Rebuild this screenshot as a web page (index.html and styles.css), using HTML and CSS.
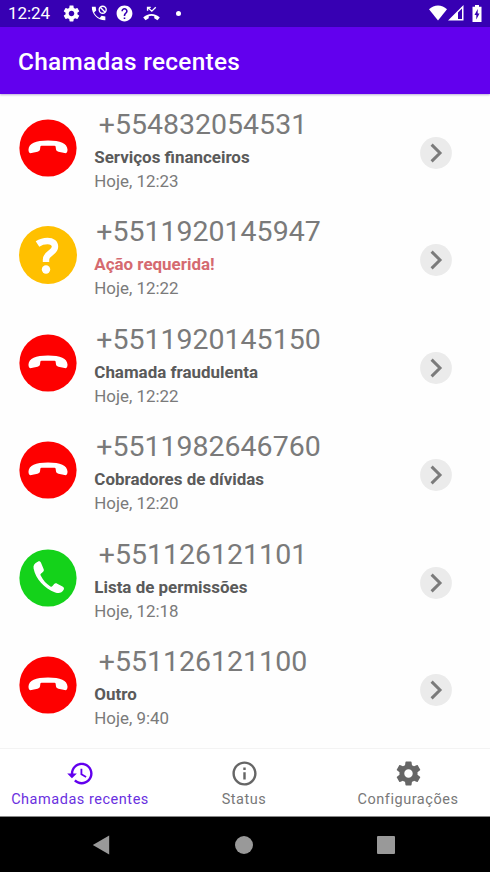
FILE: index.html
```html
<!DOCTYPE html>
<html lang="pt-BR">
<head>
<meta charset="utf-8">
<title>Chamadas recentes</title>
<link rel="stylesheet" href="styles.css">
</head>
<body>
<svg class="defs" aria-hidden="true">
  <symbol id="gear" viewBox="0 0 24 24"><path d="M19.43 12.98c.04-.32.07-.64.07-.98s-.03-.66-.07-.98l2.11-1.65c.19-.15.24-.42.12-.64l-2-3.46c-.12-.22-.39-.3-.61-.22l-2.49 1c-.52-.4-1.08-.73-1.69-.98l-.38-2.65C14.46 2.18 14.25 2 14 2h-4c-.25 0-.46.18-.49.42l-.38 2.65c-.61.25-1.17.59-1.69.98l-2.49-1c-.23-.09-.49 0-.61.22l-2 3.46c-.13.22-.07.49.12.64l2.11 1.65c-.04.32-.07.65-.07.98s.03.66.07.98l-2.11 1.65c-.19.15-.24.42-.12.64l2 3.46c.12.22.39.3.61.22l2.490-1c.52.4 1.08.73 1.69.98l.38 2.65c.03.24.24.42.49.42h4c.25 0 .46-.18.49-.42l.38-2.65c.61-.25 1.17-.59 1.69-.98l2.490 1c.23.09.49 0 .61-.22l2-3.460c.12-.22.07-.49-.12-.64l-2.110-1.650zM12 15.500c-1.930 0-3.500-1.570-3.500-3.500s1.570-3.500 3.500-3.500 3.500 1.570 3.500 3.500-1.570 3.500-3.500 3.500z"/></symbol>
  <symbol id="blocked" viewBox="0 0 58 58"><circle cx="29" cy="29" r="28.600" fill="#fe0000"/><path fill="#fff" d="M9.500 30.500C9.800 24.500 16.500 21.500 29 21.500S48.200 24.500 48.500 30.500c.1 2.700-1 4-3 3.600l-6-1.300c-1.700-.4-2.400-1.300-2.600-3l-.3-2.200c-.1-.6-.5-.8-1.100-.8h-13c-.6 0-1 .2-1.100.8l-.3 2.200c-.2 1.700-.9 2.600-2.600 3l-6 1.300c-2 .4-3.100-.9-3-3.600z"/></symbol>
  <symbol id="question" viewBox="0 0 58 58"><circle cx="29" cy="29" r="29" fill="#ffc000"/><path fill="none" stroke="#fff" stroke-width="6.400" d="M18.500 18c3-2 6.500-3 10-3 5 0 7.500 2.200 7.500 5.700 0 6.300-9 6-9 13v2.300"/><circle cx="27" cy="43.500" r="4.200" fill="#fff"/></symbol>
  <symbol id="allowed" viewBox="0 0 58 58"><circle cx="29" cy="29" r="28.600" fill="#14d21a"/><path fill="#fff" d="M18.800 12.700c1.600-.8 2.700-.2 3.300 1.400l2.500 5.900c.6 1.500.2 2.400-1 3.300l-1.500 1.200c-.8.600-.8 1.200-.4 2 2.600 5.200 5.600 8.300 9.700 10.900.8.500 1.500.4 2.100-.3l1.500-1.800c.9-1.100 1.900-1.300 3.200-.6l5.300 2.900c1.600.9 1.900 2 1 3.500-1.600 2.800-4.600 3.600-8.300 2.300C25.300 39.600 16.500 29.600 14.600 19.500c-.6-3.200.9-5.400 4.200-6.800z"/></symbol>
  <symbol id="chevron" viewBox="0 0 32 32"><circle cx="16" cy="16" r="15.900" fill="#ebebeb"/><path fill="none" stroke="#7b7b7b" stroke-width="3" d="M11.600 7.600l8.400 8.400-8.400 8.400"/></symbol>
</svg>

<header class="statusbar">
  <span class="clock">12:24</span>
  <svg class="s-gear" viewBox="0 0 24 24"><use href="#gear"/></svg>
  <svg class="s-call" viewBox="0 0 16 16"><path d="M.8 1.600h3.600l.5 3.500-2 1.900c1.200 2.300 2.900 4 5.200 5.200l1.900-2 3.500.6v3.600C6.500 14.600.5 8.500.8 1.600z"/><g class="line"><circle cx="11" cy="4.500" r="3.300"/><path d="M8.700 2.200l4.600 4.600"/></g></svg>
  <svg class="s-help" viewBox="0 0 24 24"><path d="M12 2C6.480 2 2 6.480 2 12s4.480 10 10 10 10-4.480 10-10S17.520 2 12 2zm1 17h-2v-2h2v2zm2.070-7.750l-.9.920C13.450 12.900 13 13.500 13 15h-2v-.5c0-1.100.45-2.100 1.170-2.830l1.240-1.260c.37-.36.59-.86.59-1.410 0-1.100-.9-2-2-2s-2 .9-2 2H8c0-2.210 1.790-4 4-4s4 1.790 4 4c0 .88-.36 1.680-.93 2.250z"/></svg>
  <svg class="s-missed" viewBox="0 0 16 14"><path class="line" d="M4.300 1.200l4 3.600L12 1.200M4.300 4.500V1.200h3"/><path d="M.2 10.800C4.500 6.400 11.500 6.400 15.800 10.800l-2.200 2.600-3-1.900V9.600a9 9 0 0 0-5.200 0v1.900l-3 1.900z"/></svg>
  <span class="dot"></span>
  <svg class="s-wifi" viewBox="0 0 18 16"><path d="M0 4.300C5-.9 13-.9 18 4.300L9 15.500z"/></svg>
  <svg class="s-signal" viewBox="0 0 16 16"><path fill-rule="evenodd" d="M0 15.500L15.500 0v15.500zM10 7.600v6.500h4V3.500z"/></svg>
  <svg class="s-battery" viewBox="0 0 10 17"><path fill-rule="evenodd" d="M3 0h4v1.800h2.500V17H.5V1.800H3zM5.700 4L2.500 10h1.800v4.500l3.200-6H5.700z"/></svg>
</header>

<div class="appbar"><h1>Chamadas recentes</h1></div>

<main class="calls">
  <article class="call short">
    <svg class="badge"><use href="#blocked"/></svg>
    <div class="info"><div class="number">+554832054531</div><div class="label">Serviços financeiros</div><div class="time">Hoje, 12:23</div></div>
    <svg class="more"><use href="#chevron"/></svg>
  </article>
  <article class="call">
    <svg class="badge"><use href="#question"/></svg>
    <div class="info"><div class="number">+5511920145947</div><div class="label alert">Ação requerida!</div><div class="time">Hoje, 12:22</div></div>
    <svg class="more"><use href="#chevron"/></svg>
  </article>
  <article class="call">
    <svg class="badge"><use href="#blocked"/></svg>
    <div class="info"><div class="number">+5511920145150</div><div class="label">Chamada fraudulenta</div><div class="time">Hoje, 12:22</div></div>
    <svg class="more"><use href="#chevron"/></svg>
  </article>
  <article class="call">
    <svg class="badge"><use href="#blocked"/></svg>
    <div class="info"><div class="number">+5511982646760</div><div class="label">Cobradores de dívidas</div><div class="time">Hoje, 12:20</div></div>
    <svg class="more"><use href="#chevron"/></svg>
  </article>
  <article class="call short">
    <svg class="badge"><use href="#allowed"/></svg>
    <div class="info"><div class="number">+551126121101</div><div class="label">Lista de permissões</div><div class="time">Hoje, 12:18</div></div>
    <svg class="more"><use href="#chevron"/></svg>
  </article>
  <article class="call short">
    <svg class="badge"><use href="#blocked"/></svg>
    <div class="info"><div class="number">+551126121100</div><div class="label">Outro</div><div class="time">Hoje, 9:40</div></div>
    <svg class="more"><use href="#chevron"/></svg>
  </article>
</main>

<nav class="tabs">
  <a class="tab active"><svg viewBox="0 0 24 24"><path d="M13 3c-4.970 0-9 4.030-9 9H1l3.890 3.890.07.14L9 12H6c0-3.870 3.130-7 7-7s7 3.130 7 7-3.130 7-7 7c-1.930 0-3.680-.79-4.940-2.060l-1.420 1.420C8.270 19.990 10.510 21 13 21c4.970 0 9-4.030 9-9s-4.030-9-9-9zm-1 5v5l4.280 2.540.72-1.210-3.500-2.080V8H12z"/></svg><span>Chamadas recentes</span></a>
  <a class="tab"><svg viewBox="0 0 24 24"><path d="M11 7h2v2h-2zm0 4h2v6h-2zm1-9C6.480 2 2 6.480 2 12s4.480 10 10 10 10-4.480 10-10S17.520 2 12 2zm0 18c-4.410 0-8-3.590-8-8s3.590-8 8-8 8 3.590 8 8-3.590 8-8 8z"/></svg><span>Status</span></a>
  <a class="tab"><svg viewBox="0 0 24 24"><use href="#gear"/></svg><span>Configurações</span></a>
</nav>

<footer class="system">
  <svg class="back" viewBox="0 0 18 20"><path d="M17.200.6v18.800L.8 10z"/></svg>
  <span class="home"></span>
  <span class="overview"></span>
</footer>
</body>
</html>
```
FILE: styles.css
```css
* { box-sizing: border-box; }
body {
  margin: 0;
  width: 490px;
  height: 872px;
  overflow: hidden;
  display: flex;
  flex-direction: column;
  background: #fefefe;
  font-family: Roboto, "Liberation Sans", sans-serif;
  color: #7a7a7a;
}
svg { display: block; flex: none; fill: currentColor; }
.defs { position: absolute; width: 0; height: 0; }

.statusbar {
  flex: none;
  height: 27px;
  display: flex;
  align-items: center;
  padding: 0 8px;
  background: #3700b3;
  color: #fff;
}
.clock { width: 54px; font-size: 17px; line-height: 27px; letter-spacing: -0.1px; }
.line { fill: none; stroke: currentColor; stroke-width: 1.3; }
.s-gear { width: 19px; height: 19px; }
.s-call { width: 17px; height: 17px; margin-left: 10px; }
.s-help { width: 19px; height: 19px; margin-left: 7px; }
.s-missed { width: 17px; height: 15px; margin-left: 9px; }
.dot { width: 5px; height: 5px; margin: 0 0 1px 16px; border-radius: 50%; background: currentColor; }
.s-wifi { width: 18px; height: 16px; margin: 0 1px 1px auto; }
.s-signal { width: 16px; height: 16px; margin: 0 8px 1px 0; }
.s-battery { width: 10px; height: 17px; margin: 0 0 1px; }

.appbar {
  flex: none;
  height: 67px;
  display: flex;
  align-items: center;
  padding: 2px 18px 0;
  background: #6200ee;
  color: #fff;
  box-shadow: 0 1px 2px rgba(60, 20, 140, .35);
}
h1 { margin: 0; font-size: 24.400px; font-weight: 500; letter-spacing: .3px; white-space: nowrap; }

.calls { flex: none; height: 654px; overflow: hidden; clip-path: inset(3px 0 0); }
.call {
  height: 107.600px;
  display: flex;
  align-items: flex-start;
  padding: 12.500px 38.500px 0 19.300px;
}
.badge { width: 58px; height: 58px; margin-top: 12px; }
.info { flex: 1; padding-left: 17px; white-space: nowrap; }
.number { height: 38px; line-height: 36px; font-size: 28.500px; padding-left: 2px; }
.short .number { padding-left: 4.500px; }
.label { height: 24px; line-height: 24px; font-size: 16.950px; font-weight: 700; color: #5a5a5a; }
.label.alert { color: #d56a70; }
.time { height: 24px; line-height: 24px; font-size: 16.900px; }
.more { width: 32px; height: 32px; margin-top: 30px; }

.tabs {
  flex: none;
  height: 69px;
  width: 492px;
  margin-left: -2px;
  display: flex;
  background: #fff;
  border-top: 1px solid #f3f3f3;
  border-bottom: 1px solid #888;
}
.tab {
  flex: 1;
  display: flex;
  flex-direction: column;
  align-items: center;
  padding-top: 10px;
  font-size: 14.500px;
  letter-spacing: .53px;
  line-height: 18px;
  color: #787878;
  white-space: nowrap;
}
.tab svg { width: 29px; height: 29px; fill: #666; }
.tab span { margin-top: 3px; }
.tab.active { color: #6a30e0; }
.tab.active svg { fill: #6200ee; }

.system {
  flex: none;
  height: 55px;
  display: flex;
  align-items: center;
  padding: 0 0 0 92px;
  background: #000;
  color: #999;
}
.back { width: 18px; height: 20px; }
.home { width: 18px; height: 18px; margin-left: 125px; border-radius: 50%; background: currentColor; }
.overview { width: 18px; height: 18px; margin-left: 124px; border-radius: 1px; background: currentColor; }
```
